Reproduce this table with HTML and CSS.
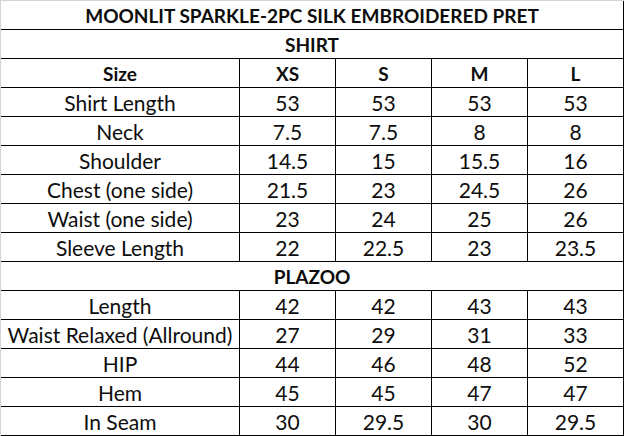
FILE: index.html
```html
<!DOCTYPE html>
<html>
<head>
<meta charset="utf-8">
<link rel="stylesheet" href="styles.css">
</head>
<body>
<div class="sheet">
  <div class="cell span bold">MOONLIT SPARKLE-2PC SILK EMBROIDERED PRET</div>
  <div class="cell span bold">SHIRT</div>

  <div class="cell bold">Size</div><div class="cell bold">XS</div><div class="cell bold">S</div><div class="cell bold">M</div><div class="cell bold">L</div>

  <div class="cell">Shirt Length</div><div class="cell">53</div><div class="cell">53</div><div class="cell">53</div><div class="cell">53</div>
  <div class="cell">Neck</div><div class="cell">7.5</div><div class="cell">7.5</div><div class="cell">8</div><div class="cell">8</div>
  <div class="cell">Shoulder</div><div class="cell">14.5</div><div class="cell">15</div><div class="cell">15.5</div><div class="cell">16</div>
  <div class="cell">Chest (one side)</div><div class="cell">21.5</div><div class="cell">23</div><div class="cell">24.5</div><div class="cell">26</div>
  <div class="cell">Waist (one side)</div><div class="cell">23</div><div class="cell">24</div><div class="cell">25</div><div class="cell">26</div>
  <div class="cell">Sleeve Length</div><div class="cell">22</div><div class="cell">22.5</div><div class="cell">23</div><div class="cell">23.5</div>

  <div class="cell span bold">PLAZOO</div>

  <div class="cell">Length</div><div class="cell">42</div><div class="cell">42</div><div class="cell">43</div><div class="cell">43</div>
  <div class="cell">Waist Relaxed (Allround)</div><div class="cell">27</div><div class="cell">29</div><div class="cell">31</div><div class="cell">33</div>
  <div class="cell">HIP</div><div class="cell">44</div><div class="cell">46</div><div class="cell">48</div><div class="cell">52</div>
  <div class="cell">Hem</div><div class="cell">45</div><div class="cell">45</div><div class="cell">47</div><div class="cell">47</div>
  <div class="cell">In Seam</div><div class="cell">30</div><div class="cell">29.5</div><div class="cell">30</div><div class="cell">29.5</div>
</div>
</body>
</html>
```
FILE: styles.css
```css
html, body {
  margin: 0;
  padding: 0;
  background: #ffffff;
}

.sheet {
  width: 624px;
  height: 436px;
  box-sizing: border-box;
  border-top: 1px solid #d4d4d4;
  border-left: 1px solid #d4d4d4;
  display: grid;
  grid-template-columns: 239px 96px 96px 96px 96px;
  grid-auto-rows: 29px;
  font-family: "Lato", "Open Sans", sans-serif;
  font-size: 21px;
  color: #0d0d0d;
}

.cell {
  box-sizing: border-box;
  border-right: 1px solid #000000;
  border-bottom: 1px solid #000000;
  display: flex;
  align-items: center;
  justify-content: center;
  white-space: nowrap;
  padding-top: 1px;
}

.span {
  grid-column: 1 / -1;
}

.bold {
  font-weight: 700;
  font-size: 19px;
}
```
